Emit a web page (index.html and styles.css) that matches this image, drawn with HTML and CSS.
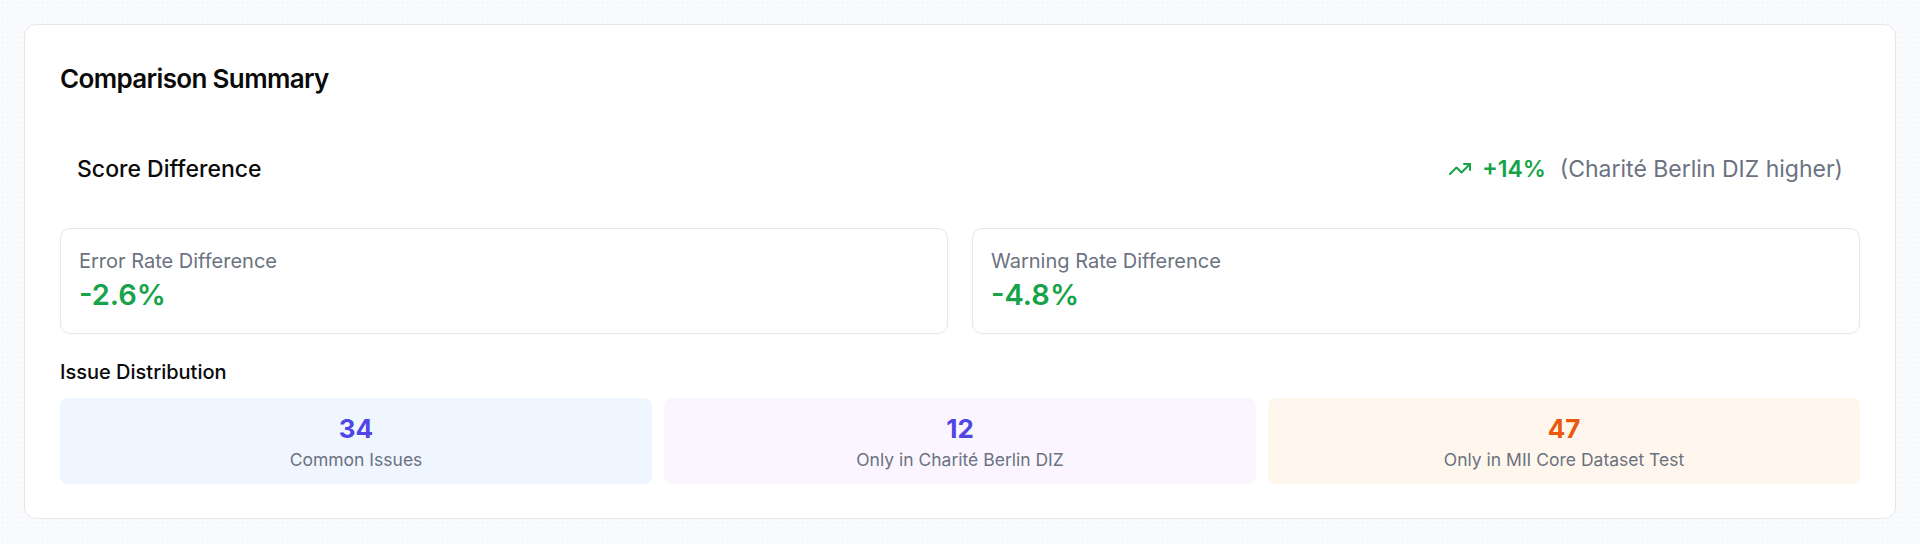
FILE: index.html
```html
<!DOCTYPE html>
<html lang="en">
<head>
<meta charset="utf-8">
<title>Comparison Summary</title>
<link rel="stylesheet" href="styles.css">
</head>
<body>
<main class="page">
  <section class="card">
    <h2 class="card-title">Comparison Summary</h2>

    <div class="score-row">
      <span class="score-label">Score Difference</span>
      <span class="score-value">
        <svg class="trend-icon" viewBox="0 0 24 24" fill="none" stroke="currentColor" stroke-width="2" stroke-linecap="round" stroke-linejoin="round" aria-hidden="true">
          <polyline points="22 7 13.5 15.5 8.5 10.5 2 17"></polyline>
          <polyline points="16 7 22 7 22 13"></polyline>
        </svg>
        <span class="score-delta">+14%</span>
        <span class="score-note">(Charité Berlin DIZ higher)</span>
      </span>
    </div>

    <div class="rate-grid">
      <div class="rate-box">
        <div class="rate-label">Error Rate Difference</div>
        <div class="rate-value">-2.6%</div>
      </div>
      <div class="rate-box">
        <div class="rate-label">Warning Rate Difference</div>
        <div class="rate-value">-4.8%</div>
      </div>
    </div>

    <h3 class="section-title">Issue Distribution</h3>
    <div class="issue-grid">
      <div class="issue-box issue-common">
        <div class="issue-num">34</div>
        <div class="issue-label">Common Issues</div>
      </div>
      <div class="issue-box issue-left">
        <div class="issue-num">12</div>
        <div class="issue-label">Only in Charité Berlin DIZ</div>
      </div>
      <div class="issue-box issue-right">
        <div class="issue-num">47</div>
        <div class="issue-label">Only in MII Core Dataset Test</div>
      </div>
    </div>
  </section>
</main>
</body>
</html>
```

FILE: styles.css
```css
* { box-sizing: border-box; }

html, body {
  margin: 0;
  padding: 0;
}

body {
  font-family: Inter, "Noto Sans", "Liberation Sans", sans-serif;
  background-color: #f9fafb;
  background-image: radial-gradient(circle, #eef0f3 0.5px, transparent 0.8px);
  background-size: 5px 5px;
  color: #0a0a0a;
  width: 1920px;
  height: 544px;
  overflow: hidden;
}

.page {
  padding: 24px;
}

.card {
  background: #ffffff;
  border: 1px solid #e5e7eb;
  border-radius: 12px;
  padding: 36px 35px 34px 35px;
  height: 495px;
}

.card-title {
  margin: 0 0 40px 0;
  font-size: 26px;
  line-height: 36px;
  font-weight: 600;
  letter-spacing: -0.025em;
  color: #0a0a0a;
}

.score-row {
  display: flex;
  justify-content: space-between;
  align-items: center;
  padding: 16px 17px;
  margin-bottom: 27px;
}

.score-label {
  font-size: 23px;
  line-height: 32px;
  font-weight: 500;
  color: #0a0a0a;
}

.score-value {
  display: flex;
  align-items: center;
  gap: 14px;
}

.trend-icon {
  width: 24px;
  height: 24px;
  color: #16a34a;
  margin-right: -4px;
}

.score-delta {
  font-size: 23px;
  line-height: 32px;
  font-weight: 600;
  color: #16a34a;
}

.score-note {
  font-size: 23px;
  line-height: 32px;
  color: #6b7280;
}

.rate-grid {
  display: grid;
  grid-template-columns: 1fr 1fr;
  gap: 24px;
  margin-bottom: 24px;
}

.rate-box {
  border: 1px solid #e5e7eb;
  border-radius: 10px;
  padding: 18px;
}

.rate-label {
  font-size: 20px;
  line-height: 28px;
  color: #6b7280;
}

.rate-value {
  font-size: 29px;
  line-height: 40px;
  font-weight: 600;
  color: #16a34a;
}

.section-title {
  margin: 0 0 12px 0;
  font-size: 20px;
  line-height: 28px;
  font-weight: 500;
  color: #0a0a0a;
}

.issue-grid {
  display: grid;
  grid-template-columns: repeat(3, 1fr);
  gap: 12px;
}

.issue-box {
  border-radius: 8px;
  text-align: center;
  padding: 15px 12px 10px 12px;
  height: 86px;
}

.issue-common { background: #eff6ff; }
.issue-left { background: #faf5ff; }
.issue-right { background: #fff7ed; }

.issue-num {
  font-size: 26px;
  line-height: 32px;
  font-weight: 700;
  color: #4f46e5;
}

.issue-right .issue-num { color: #ea580c; }

.issue-label {
  margin-top: 1px;
  font-size: 17.5px;
  line-height: 28px;
  color: #6b7280;
}
```
